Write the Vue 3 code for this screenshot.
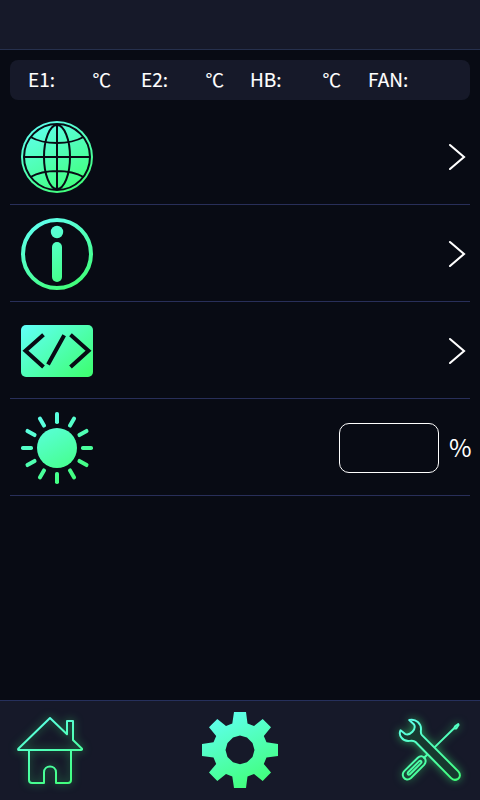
<script setup>
const rays = Array.from({ length: 12 }, (_, i) => i * 30)
const readings = [
  { label: 'E1:', unit: '℃', key: 'e1' },
  { label: 'E2:', unit: '℃', key: 'e2' },
  { label: 'HB:', unit: '℃', key: 'hb' },
  { label: 'FAN:', unit: '', key: 'fan' }
]
</script>

<template>
  <div class="screen">
    <svg class="defs" width="0" height="0" aria-hidden="true">
      <defs>
        <linearGradient id="g72" gradientUnits="userSpaceOnUse" x1="10" y1="4" x2="46" y2="72">
          <stop offset="0" stop-color="#5ffff0" /><stop offset="1" stop-color="#41ff7a" />
        </linearGradient>
        <linearGradient id="gcode" gradientUnits="userSpaceOnUse" x1="4" y1="8" x2="56" y2="68">
          <stop offset="0" stop-color="#61fff9" /><stop offset="1" stop-color="#3fff75" />
        </linearGradient>
        <linearGradient id="gnav" gradientUnits="userSpaceOnUse" x1="28" y1="14" x2="62" y2="88">
          <stop offset="0" stop-color="#5ffff0" /><stop offset="1" stop-color="#41ff7a" />
        </linearGradient>
      </defs>
    </svg>

    <header class="topbar"></header>

    <div class="status">
      <div v-for="r in readings" :key="r.key" class="reading" :class="r.key">
        <span>{{ r.label }}</span><span v-if="r.unit" class="unit">{{ r.unit }}</span>
      </div>
    </div>

    <main class="list">
      <div class="row">
        <svg class="icon" viewBox="0 0 72 72">
          <circle cx="36" cy="36" r="36" fill="url(#g72)" />
          <g fill="none" stroke="#080b14" stroke-width="2">
            <circle cx="36" cy="36" r="33" />
            <ellipse cx="36" cy="36" rx="13" ry="32" />
            <path d="M36 3V69M3 36H69M9.5 16Q20 22 36 22T62.5 16M9.5 56Q20 50 36 50T62.5 56" />
          </g>
        </svg>
        <svg class="chevron" viewBox="0 0 18 28"><path d="M2 2L16 14L2 26" /></svg>
      </div>
      <div class="row">
        <svg class="icon" viewBox="0 0 72 72">
          <circle cx="36" cy="36" r="34" fill="none" stroke="url(#g72)" stroke-width="4" />
          <circle cx="36" cy="14" r="6.2" fill="url(#g72)" />
          <rect x="31" y="24" width="10" height="40" rx="5" fill="url(#g72)" />
        </svg>
        <svg class="chevron" viewBox="0 0 18 28"><path d="M2 2L16 14L2 26" /></svg>
      </div>
      <div class="row">
        <svg class="icon" viewBox="0 0 72 72">
          <rect y="10" width="72" height="52" rx="5" fill="url(#gcode)" />
          <path d="M22.5 19.7L4.5 35.7L22.5 52M43.2 20.3L27 49.5M49.5 19.7L67.5 35.7L49.5 52" fill="none" stroke="#080b14" stroke-width="4" />
        </svg>
        <svg class="chevron" viewBox="0 0 18 28"><path d="M2 2L16 14L2 26" /></svg>
      </div>
      <div class="row brightness">
        <svg class="icon" viewBox="0 0 72 72">
          <mask id="sun" maskUnits="userSpaceOnUse" x="0" y="0" width="72" height="72">
            <circle cx="36" cy="36" r="20" fill="#fff" />
            <rect v-for="a in rays" :key="a" x="34" y="0" width="4" height="12" rx="1.8" fill="#fff" :transform="`rotate(${a} 36 36)`" />
          </mask>
          <rect width="72" height="72" fill="url(#g72)" mask="url(#sun)" />
        </svg>
        <div class="field"><input class="value" type="text" aria-label="%" /><span class="percent">%</span></div>
      </div>
    </main>

    <nav class="nav">
      <svg class="navicon glow" viewBox="0 0 100 100">
        <path d="M18.3 48.7L50 18L67 34.3V21H73V40L82 48.7Q82.3 50 81 50H19Q17.7 50 18.3 48.7ZM29 50V80Q29 83 32 83H44V72.5C44 64.5 56 64.5 56 72.5V83H68Q71 83 71 80V50" />
      </svg>
      <svg class="navicon" viewBox="0 0 100 100">
        <path fill="url(#gnav)" fill-rule="evenodd" d="M44 12H56L57.5 23.5L64 26L72.7 19L81 27.3L73.8 36L76.5 42.3L88 44V56L76.5 57.5L73.8 64L81 72.5L72.7 81L64 74L57.5 76.5L56 88H44L42.3 76.5L36 74L27.3 81L19 72.5L26.2 64L23.5 57.5L12 56V44L23.5 42.3L26.2 36L19 27.3L27.3 19L36 26L42.3 23.5ZM50 35.5L43 37.4L37.5 43L35.5 50L37.5 57L43 62.3L50 64.3L57 62.3L62.5 57L64.5 50L62.5 43L57 37.4Z" />
      </svg>
      <svg class="navicon glow" viewBox="0 0 100 100">
        <g transform="translate(.7 1) scale(.982)">
          <path d="M54.5 47.5L74.5 28L76 25.5L79 23.5L79.3 24.5L77 28L74.5 28M48.5 53.5L43.5 58.5" />
          <path d="M24.2 71.2L37.8 57.8C40.8 55 44 56.5 45.2 58.8C46.2 61 46 63 44.2 65L30.8 78.4C28 81 24.8 80 23.3 77.8C22 75.5 22.2 73.2 24.2 71.2ZM27.7 72.8L39.3 61.2Q40.5 60.5 41.3 61.5Q41.8 62.5 41 63.3L29.5 74.8Q28.4 75.4 27.7 74.5Q27.2 73.5 27.7 72.8Z" />
          <path class="wrench" d="M29 19.4C36 17.8 41.5 23 41 29.5Q40.5 33.2 42 34.8L79 71.7C81.5 74.5 81 77.7 78.7 79.3C76.3 80.8 73.5 80.4 71.5 78.3L35.5 41.8Q33.5 39.8 29.5 40.6C22 41.5 17.8 34.5 20.2 29.8L25 33.7C30 35.5 36.5 28.8 34 24Z" />
        </g>
      </svg>
    </nav>
  </div>
</template>

<style>
body { background: #080b14; }
</style>

<style scoped>
.screen {
  width: 480px;
  height: 800px;
  box-sizing: border-box;
  display: flex;
  flex-direction: column;
  background: #080b14;
  color: #fff;
  overflow: hidden;
  font-family: "Noto Sans CJK SC", sans-serif;
}
.defs { position: absolute; }
.topbar { height: 49px; flex: none; background: #161929; border-bottom: 1px solid #26304d; }
.status {
  height: 40px;
  flex: none;
  box-sizing: border-box;
  margin: 10px 10px 8px;
  padding-left: 18px;
  padding-bottom: 2px;
  display: flex;
  align-items: center;
  border-radius: 8px;
  background: #161929;
  font-size: 19px;
  line-height: 38px;
  -webkit-text-stroke: .12px #fff;
}
.reading { display: flex; justify-content: space-between; white-space: nowrap; }
.unit { font-size: 18.5px; }
.e1, .e2 { width: 83px; margin-right: 30px; }
.e2 { margin-right: 26px; }
.hb { width: 91px; margin-right: 27px; }
.list { flex: 1; padding: 0 10px; }
.row {
  height: 97px;
  box-sizing: border-box;
  border-bottom: 1px solid #282f59;
  padding: 1px 4px 0 11px;
  display: flex;
  align-items: center;
  justify-content: space-between;
}
.icon { width: 72px; height: 72px; }
.chevron { width: 18px; height: 28px; fill: none; stroke: #fff; stroke-width: 2.1; stroke-linecap: round; }
.brightness { padding-right: 0; }
.field { display: flex; align-items: center; gap: 10px; margin-right: -2px; }
.value {
  width: 100px;
  height: 50px;
  box-sizing: border-box;
  border: 1px solid #fff;
  border-radius: 10px;
  background: transparent;
  color: #fff;
  font: inherit;
  outline: none;
}
.percent { width: 23px; font-size: 24.5px; line-height: 36px; padding-bottom: 2px; }
.nav {
  height: 100px;
  flex: none;
  box-sizing: border-box;
  border-top: 1px solid #26305c;
  background: #161929;
  display: flex;
  align-items: flex-start;
  justify-content: space-between;
}
.navicon { width: 100px; height: 100px; margin-top: -1px; flex: none; }
.glow { fill: none; stroke: url(#gnav); stroke-width: 2; stroke-linejoin: round; filter: drop-shadow(0 0 4px rgba(55, 255, 120, .55)); }
.wrench { fill: #17392f; }
</style>
